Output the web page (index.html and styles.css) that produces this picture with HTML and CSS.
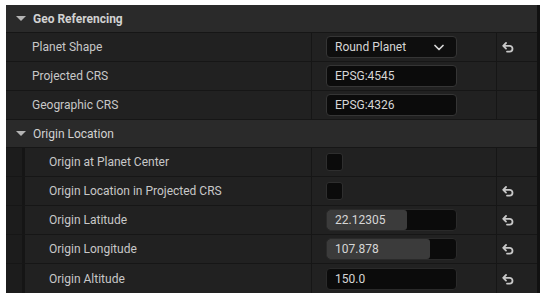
FILE: index.html
```html
<!doctype html>
<html lang="en">
<head>
  <meta charset="UTF-8" />
  <title>Geo Referencing</title>
  <link rel="stylesheet" href="styles.css">
</head>
<body>
  <div class="panel">
    <!-- Geo Referencing -->
    <div class="section-head">
      <span class="arrow"></span>
      <span>Geo Referencing</span>
    </div>
    <div class="row">
      <div class="label">Planet Shape</div>
      <div class="value">
        <div class="box combo">
          <span>Round Planet</span>
          <svg class="chevron" width="10" height="7" viewBox="0 0 10 7"><polyline points="1,1.5 5,5.5 9,1.5" fill="none" stroke="#d8d8d8" stroke-width="1.7" stroke-linecap="round" stroke-linejoin="round"/></svg>
        </div>
      </div>
      <div class="reset">
        <svg class="reset-icon" width="12" height="11" viewBox="0 0 12 11"><path d="M4 1 L1.2 3.8 L4 6.6 M1.2 3.8 H7.6 A2.9 2.9 0 0 1 7.6 9.6 H5" fill="none" stroke="#c8c8c8" stroke-width="1.8" stroke-linecap="round" stroke-linejoin="round"/></svg>
      </div>
    </div>
    <div class="row">
      <div class="label">Projected CRS</div>
      <div class="value"><div class="box">EPSG:4545</div></div>
      <div class="reset"></div>
    </div>
    <div class="row">
      <div class="label">Geographic CRS</div>
      <div class="value"><div class="box">EPSG:4326</div></div>
      <div class="reset"></div>
    </div>

    <!-- Origin Location -->
    <div class="section-head">
      <span class="arrow"></span>
      <span class="plain">Origin Location</span>
    </div>
    <div class="row nested">
      <div class="label"><span class="indent"></span><span class="text">Origin at Planet Center</span></div>
      <div class="value"><div class="check"></div></div>
      <div class="reset"></div>
    </div>
    <div class="row nested">
      <div class="label"><span class="indent"></span><span class="text">Origin Location in Projected CRS</span></div>
      <div class="value"><div class="check"></div></div>
      <div class="reset">
        <svg class="reset-icon" width="12" height="11" viewBox="0 0 12 11"><path d="M4 1 L1.2 3.8 L4 6.6 M1.2 3.8 H7.6 A2.9 2.9 0 0 1 7.6 9.6 H5" fill="none" stroke="#c8c8c8" stroke-width="1.8" stroke-linecap="round" stroke-linejoin="round"/></svg>
      </div>
    </div>
    <div class="row nested">
      <div class="label"><span class="indent"></span><span class="text">Origin Latitude</span></div>
      <div class="value">
        <div class="box number"><span class="fill" style="width: 80px"></span><span class="num">22.12305</span></div>
      </div>
      <div class="reset">
        <svg class="reset-icon" width="12" height="11" viewBox="0 0 12 11"><path d="M4 1 L1.2 3.8 L4 6.6 M1.2 3.8 H7.6 A2.9 2.9 0 0 1 7.6 9.6 H5" fill="none" stroke="#c8c8c8" stroke-width="1.8" stroke-linecap="round" stroke-linejoin="round"/></svg>
      </div>
    </div>
    <div class="row nested">
      <div class="label"><span class="indent"></span><span class="text">Origin Longitude</span></div>
      <div class="value">
        <div class="box number"><span class="fill" style="width: 103px"></span><span class="num">107.878</span></div>
      </div>
      <div class="reset">
        <svg class="reset-icon" width="12" height="11" viewBox="0 0 12 11"><path d="M4 1 L1.2 3.8 L4 6.6 M1.2 3.8 H7.6 A2.9 2.9 0 0 1 7.6 9.6 H5" fill="none" stroke="#c8c8c8" stroke-width="1.8" stroke-linecap="round" stroke-linejoin="round"/></svg>
      </div>
    </div>
    <div class="row nested last">
      <div class="label"><span class="indent"></span><span class="text">Origin Altitude</span></div>
      <div class="value"><div class="box number"><span class="num">150.0</span></div></div>
      <div class="reset">
        <svg class="reset-icon" width="12" height="11" viewBox="0 0 12 11"><path d="M4 1 L1.2 3.8 L4 6.6 M1.2 3.8 H7.6 A2.9 2.9 0 0 1 7.6 9.6 H5" fill="none" stroke="#c8c8c8" stroke-width="1.8" stroke-linecap="round" stroke-linejoin="round"/></svg>
      </div>
    </div>
  </div>
</body>
</html>
```

FILE: styles.css
```css
body, html {
  margin: 0;
  padding: 0;
  background: #ffffff;
  font-family: 'Roboto', 'Liberation Sans', sans-serif;
}
/* Details panel */
.panel {
  margin: 5px 0 0 6px;
  width: 531px;
  background: #1c1c1c;
  border-right: 3px solid #111111;
  font-size: 12px;
  color: #c8c8c8;
}
/* Category headers */
.section-head {
  height: 28px;
  box-sizing: border-box;
  display: flex;
  align-items: center;
  background: #2a2a2a;
  border-bottom: 1px solid #161616;
  font-weight: bold;
  color: #d2d2d2;
}
.section-head .plain {
  font-weight: normal;
}
.arrow {
  width: 0;
  height: 0;
  margin: 0 7px 0 10px;
  border-left: 5px solid transparent;
  border-right: 5px solid transparent;
  border-top: 5px solid #b4b4b4;
}
/* Property rows */
.row {
  height: 29px;
  box-sizing: border-box;
  display: grid;
  grid-template-columns: 306px 185px 40px;
  background: #212121;
  border-bottom: 1px solid #161616;
}
.row.last {
  border-bottom: none;
}
.label {
  display: flex;
  align-items: center;
  padding-left: 26px;
  border-right: 1px solid #161616;
}
.row.nested .label {
  padding-left: 0;
}
.indent {
  width: 16px;
  height: 100%;
  background: #1c1c1c;
  border-right: 3px solid #151515;
}
.row.nested .text {
  padding-left: 24px;
}
.value {
  display: flex;
  align-items: center;
  padding-left: 14px;
  border-right: 1px solid #161616;
}
.reset {
  display: flex;
  align-items: center;
  padding: 1px 0 0 5px;
}
/* Inputs */
.box {
  position: relative;
  width: 131px;
  height: 22px;
  box-sizing: border-box;
  display: flex;
  align-items: center;
  padding-left: 8px;
  background: #0b0b0b;
  border: 1px solid #353535;
  border-radius: 4px;
  color: #d6d6d6;
  overflow: hidden;
}
.combo {
  justify-content: space-between;
  padding-right: 12px;
  background: #0e0e0e;
}
.number {
  border-color: #2a2a2a;
}
.fill {
  position: absolute;
  left: 0;
  top: 0;
  bottom: 0;
  background: #3b3b3b;
  border-radius: 3px;
}
.num {
  position: relative;
}
.check {
  width: 17px;
  height: 18px;
  box-sizing: border-box;
  background: #0b0b0b;
  border: 1px solid #2e2e2e;
  border-radius: 3px;
}
```
